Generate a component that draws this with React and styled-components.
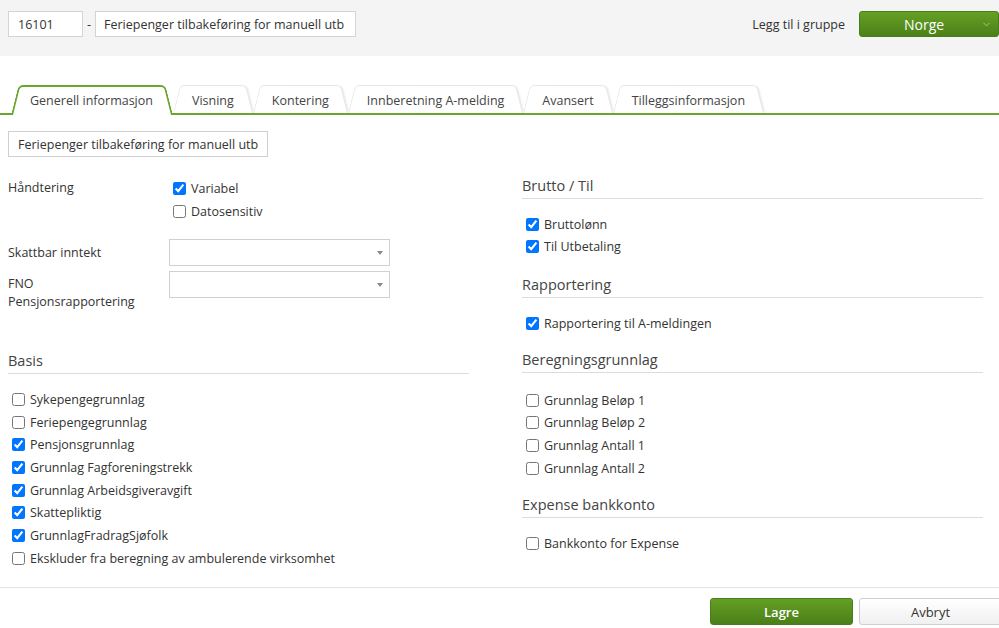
import React from "react";
import styled, { createGlobalStyle } from "styled-components";
import { ChevronDown } from "lucide-react";

const GlobalStyle = createGlobalStyle`
  html, body {
    margin: 0;
    padding: 0;
    overflow: hidden;
    background: #fff;
    font-family: "Open Sans", "Liberation Sans", sans-serif;
    font-size: 12.5px;
    color: #333;
  }
  * { box-sizing: border-box; }
`;

const Page = styled.div`
  display: flex;
  flex-direction: column;
  height: 100vh;
`;

const Header = styled.div`
  height: 56px;
  background: #f4f4f4;
  display: flex;
  align-items: flex-start;
  justify-content: space-between;
  padding: 11px 0 0 8px;
`;

const TitleGroup = styled.div`
  display: flex;
  align-items: center;
`;

const TextBox = styled.div`
  height: 26px;
  width: ${(p) => p.$width}px;
  border: 1px solid #d4d4d4;
  background: #fff;
  display: flex;
  align-items: center;
  padding: 0 ${(p) => p.$pad}px;
  font-size: 12.5px;
  color: #333;
  white-space: nowrap;
`;

const Dash = styled.span`
  width: 12px;
  text-align: center;
  font-size: 12.5px;
`;

const GroupPicker = styled.div`
  display: flex;
  align-items: center;
  gap: 14px;
`;

const GroupLabel = styled.span`
  font-size: 12.5px;
  color: #333;
`;

const GreenSelect = styled.div`
  position: relative;
  width: 140px;
  height: 26px;
  border-radius: 3px;
  border: 1px solid #4b7c1b;
  background: linear-gradient(#64a024, #4c8019);
  color: #fff;
  font-size: 14px;
  display: flex;
  align-items: center;
  padding-left: 44px;
  svg {
    position: absolute;
    right: 6px;
    top: 7px;
    color: #c9dcb2;
  }
`;

const TabStrip = styled.div`
  display: flex;
  align-items: flex-end;
  margin-top: 29px;
  padding-left: 11px;
  border-bottom: 2px solid #6aa52c;
`;

const Tab = styled.div`
  position: relative;
  z-index: ${(p) => (p.$active ? 20 : p.$z)};
  height: 28px;
  padding: 2px ${(p) => (p.$active ? 20 : 19)}px 0 19px;
  display: flex;
  align-items: center;
  font-size: 12.5px;
  color: #444;
  white-space: nowrap;

  &::before,
  &::after {
    content: "";
    position: absolute;
    top: 0;
    bottom: ${(p) => (p.$active ? -2 : 0)}px;
    width: 60%;
    background: #fff;
    z-index: -1;
    border: ${(p) => (p.$active ? "2px solid #6aa52c" : "1px solid #e6e6e6")};
    border-bottom: none;
  }
  &::before {
    left: 0;
    border-right: none;
    border-radius: 5px 0 0 0;
    transform: skewX(-14deg);
    transform-origin: bottom left;
  }
  &::after {
    right: 0;
    border-left: none;
    border-radius: 0 5px 0 0;
    transform: skewX(14deg);
    transform-origin: bottom right;
    box-shadow: ${(p) => (p.$active ? "none" : "2px 0 2px -1px rgba(0,0,0,0.10)")};
  }
`;

const Main = styled.div`
  flex: 1;
  padding: 16px 16px 0 8px;
`;

const NameButton = styled.div`
  display: inline-flex;
  align-items: center;
  height: 26px;
  padding: 0 9px;
  border: 1px solid #cfcfcf;
  background: #fff;
  font-size: 12.5px;
  color: #333;
`;

const Columns = styled.div`
  display: grid;
  grid-template-columns: 461px 461px;
  column-gap: 53px;
  margin-top: 19px;
`;

const Column = styled.div`
  display: flex;
  flex-direction: column;
`;

const FieldRow = styled.div`
  display: flex;
  align-items: ${(p) => (p.$top ? "flex-start" : "center")};
  margin-top: ${(p) => p.$mt || 0}px;
`;

const FieldLabel = styled.div`
  width: 161px;
  flex-shrink: 0;
  font-size: 12.5px;
  line-height: 18px;
  color: #333;
  padding-top: ${(p) => p.$pt || 0}px;
`;

const CheckList = styled.div`
  display: flex;
  flex-direction: column;
  margin-top: ${(p) => p.$mt || 0}px;
`;

const CheckRow = styled.label`
  display: flex;
  align-items: center;
  height: ${(p) => p.$h || 22.7}px;
  font-size: 12.5px;
  color: #333;
  white-space: nowrap;
  input {
    width: 13px;
    height: 13px;
    margin: 0 5px 0 4px;
  }
`;

const Dropdown = styled.div`
  position: relative;
  width: 221px;
  height: 27px;
  border: 1px solid #d0d0d0;
  background: #fff;
  &::after {
    content: "";
    position: absolute;
    right: 6px;
    top: 11px;
    border-left: 3px solid transparent;
    border-right: 3px solid transparent;
    border-top: 4px solid #8a8a8a;
  }
`;

const SectionTitle = styled.div`
  font-size: 14.5px;
  line-height: 20px;
  color: #444;
  padding-bottom: 2px;
  border-bottom: 1px solid #dcdcdc;
  margin-top: ${(p) => p.$mt || 0}px;
`;

const Footer = styled.div`
  height: 41px;
  border-top: 1px solid #e3e3e3;
  display: flex;
  justify-content: flex-end;
  align-items: flex-start;
  gap: 6px;
  padding-top: 10px;
  margin-right: -3px;
`;

const Button = styled.div`
  width: 143px;
  height: 27px;
  border-radius: 3px;
  display: flex;
  align-items: center;
  justify-content: center;
  font-size: 13px;
  border: 1px solid ${(p) => (p.$primary ? "#4b7c1b" : "#cfcfcf")};
  background: ${(p) =>
    p.$primary ? "linear-gradient(#64a024, #4b7f18)" : "linear-gradient(#fff, #f0f0f0)"};
  color: ${(p) => (p.$primary ? "#fff" : "#333")};
  font-weight: ${(p) => (p.$primary ? 600 : 400)};
`;

const tabs = [
  "Generell informasjon",
  "Visning",
  "Kontering",
  "Innberetning A-melding",
  "Avansert",
  "Tilleggsinformasjon",
];

const basis = [
  ["Sykepengegrunnlag", false],
  ["Feriepengegrunnlag", false],
  ["Pensjonsgrunnlag", true],
  ["Grunnlag Fagforeningstrekk", true],
  ["Grunnlag Arbeidsgiveravgift", true],
  ["Skattepliktig", true],
  ["GrunnlagFradragSjøfolk", true],
  ["Ekskluder fra beregning av ambulerende virksomhet", false],
];

const beregning = ["Grunnlag Beløp 1", "Grunnlag Beløp 2", "Grunnlag Antall 1", "Grunnlag Antall 2"];

const Check = ({ label, checked, h }) => (
  <CheckRow $h={h}>
    <input type="checkbox" defaultChecked={checked} />
    {label}
  </CheckRow>
);

export default function App() {
  return (
    <Page>
      <GlobalStyle />
      <Header>
        <TitleGroup>
          <TextBox $width={75} $pad={9}>16101</TextBox>
          <Dash>-</Dash>
          <TextBox $width={261} $pad={8}>Feriepenger tilbakeføring for manuell utb</TextBox>
        </TitleGroup>
        <GroupPicker>
          <GroupLabel>Legg til i gruppe</GroupLabel>
          <GreenSelect>
            Norge
            <ChevronDown size={11} strokeWidth={1.5} />
          </GreenSelect>
        </GroupPicker>
      </Header>

      <TabStrip>
        {tabs.map((t, i) => (
          <Tab key={t} $active={i === 0} $z={10 - i}>
            {t}
          </Tab>
        ))}
      </TabStrip>

      <Main>
        <NameButton>Feriepenger tilbakeføring for manuell utb</NameButton>

        <Columns>
          <Column>
            <FieldRow $top>
              <FieldLabel $pt={3}>Håndtering</FieldLabel>
              <CheckList $mt={1}>
                <Check label="Variabel" checked h={23} />
                <Check label="Datosensitiv" h={23} />
              </CheckList>
            </FieldRow>
            <FieldRow $mt={16}>
              <FieldLabel>Skattbar inntekt</FieldLabel>
              <Dropdown />
            </FieldRow>
            <FieldRow $top $mt={5}>
              <FieldLabel $pt={4}>
                FNO
                <br />
                Pensjonsrapportering
              </FieldLabel>
              <Dropdown />
            </FieldRow>

            <SectionTitle $mt={40}>Basis</SectionTitle>
            <CheckList $mt={14}>
              {basis.map(([label, checked]) => (
                <Check key={label} label={label} checked={checked} />
              ))}
            </CheckList>
          </Column>

          <Column>
            <SectionTitle>Brutto / Til</SectionTitle>
            <CheckList $mt={14}>
              <Check label="Bruttolønn" checked h={22} />
              <Check label="Til Utbetaling" checked h={22} />
            </CheckList>

            <SectionTitle $mt={18}>Rapportering</SectionTitle>
            <CheckList $mt={14}>
              <Check label="Rapportering til A-meldingen" checked />
            </CheckList>

            <SectionTitle $mt={15}>Beregningsgrunnlag</SectionTitle>
            <CheckList $mt={16}>
              {beregning.map((label) => (
                <Check key={label} label={label} />
              ))}
            </CheckList>

            <SectionTitle $mt={16}>Expense bankkonto</SectionTitle>
            <CheckList $mt={14}>
              <Check label="Bankkonto for Expense" />
            </CheckList>
          </Column>
        </Columns>
      </Main>

      <Footer>
        <Button $primary>Lagre</Button>
        <Button>Avbryt</Button>
      </Footer>
    </Page>
  );
}
